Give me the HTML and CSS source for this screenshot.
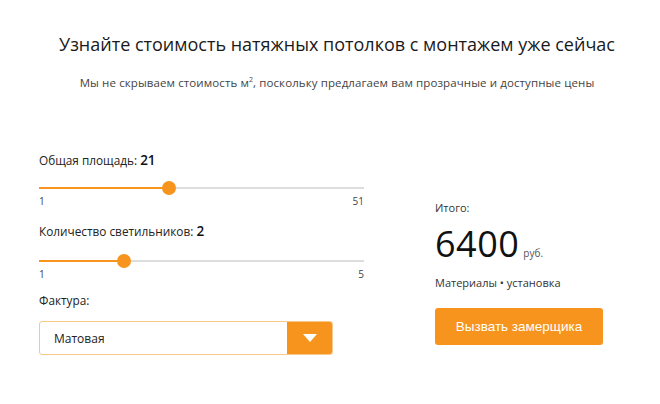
FILE: index.html
```html
<!DOCTYPE html>
<html lang="ru">
<head>
<meta charset="utf-8">
<link rel="stylesheet" href="styles.css">
</head>
<body>
<div class="page">
  <h1 class="title">Узнайте стоимость натяжных потолков с монтажем уже сейчас</h1>
  <p class="subtitle">Мы не скрываем стоимость м<sup>2</sup>, поскольку предлагаем вам прозрачные и доступные цены</p>
  <div class="calc">
    <div class="left">
      <div class="label">Общая площадь: <b>21</b></div>
      <div class="slider">
        <div class="fill" style="width:40%"></div>
        <div class="thumb" style="left:40%"></div>
      </div>
      <div class="scale"><span>1</span><span>51</span></div>
      <div class="label label2">Количество светильников: <b>2</b></div>
      <div class="slider slider2">
        <div class="fill" style="width:26%"></div>
        <div class="thumb" style="left:26%"></div>
      </div>
      <div class="scale"><span>1</span><span>5</span></div>
      <div class="label label3">Фактура:</div>
      <div class="select">
        <span class="select-text">Матовая</span>
        <span class="select-btn"><svg width="14" height="8" viewBox="0 0 14 8"><path d="M0 0H14L7 8Z" fill="#fff"/></svg></span>
      </div>
    </div>
    <div class="right">
      <div class="total-label">Итого:</div>
      <div class="total"><span class="num">6400</span><span class="cur">руб.</span></div>
      <div class="note">Материалы • установка</div>
      <button class="cta">Вызвать замерщика</button>
    </div>
  </div>
</div>
</body>
</html>
```
FILE: styles.css
```css
* { box-sizing: border-box; }
body { margin: 0; background: #fff; font-family: "Open Sans", "Lato", sans-serif; color: #222; }
.page { width: 660px; height: 404px; padding-top: 32px; }
.title { margin: 0; padding-left: 14px; text-align: center; font-size: 18px; font-weight: 400; color: #1a1a1a; line-height: 24px; }
.subtitle { margin: 20px 0 0; padding-left: 14px; text-align: center; font-size: 11.5px; letter-spacing: 0.1px; color: #444; line-height: 14px; }
.subtitle sup { font-size: 7px; line-height: 0; }
.calc { display: flex; padding-left: 39px; margin-top: 62px; }
.left { width: 325px; }
.label { font-size: 11.8px; color: #222; line-height: 16px; }
.label b { font-size: 13.5px; font-weight: 600; color: #111; }
.slider { position: relative; height: 2px; background: #ddd; margin-top: 19px; }
.slider2 { margin-top: 21px; }
.fill { position: absolute; left: 0; top: 0; height: 2px; background: #f7941d; }
.thumb { position: absolute; top: -6px; width: 14px; height: 14px; margin-left: -7px; border-radius: 50%; background: #f7941d; }
.scale { display: flex; justify-content: space-between; font-size: 10px; color: #444; margin-top: 6px; line-height: 12px; }
.label2 { margin-top: 16px; }
.label3 { margin-top: 12px; }
.select { display: flex; width: 294px; height: 34px; margin-top: 13px; border: 1px solid #f6c98a; border-radius: 3px; overflow: hidden; }
.select-text { flex: 1; display: flex; align-items: center; padding-left: 14px; font-size: 12px; color: #222; }
.select-btn { width: 45px; background: #f7941d; display: flex; align-items: center; justify-content: center; }
.right { margin-left: 71px; padding-top: 49px; }
.total-label { font-size: 11px; color: #333; line-height: 14px; }
.total { margin-top: 9px; display: flex; align-items: baseline; height: 40px; }
.num { font-size: 36px; font-weight: 400; color: #111; line-height: 40px; letter-spacing: 0.5px; }
.cur { font-size: 10px; color: #555; margin-left: 4px; }
.note { font-size: 11px; color: #333; margin-top: 12px; line-height: 14px; }
.cta { display: block; margin-top: 18px; width: 168px; height: 37px; border: 0; border-radius: 3px; background: #f7941d; color: #fff; font-family: "Liberation Sans", Arial, sans-serif; font-size: 13.5px; cursor: pointer; }
```
